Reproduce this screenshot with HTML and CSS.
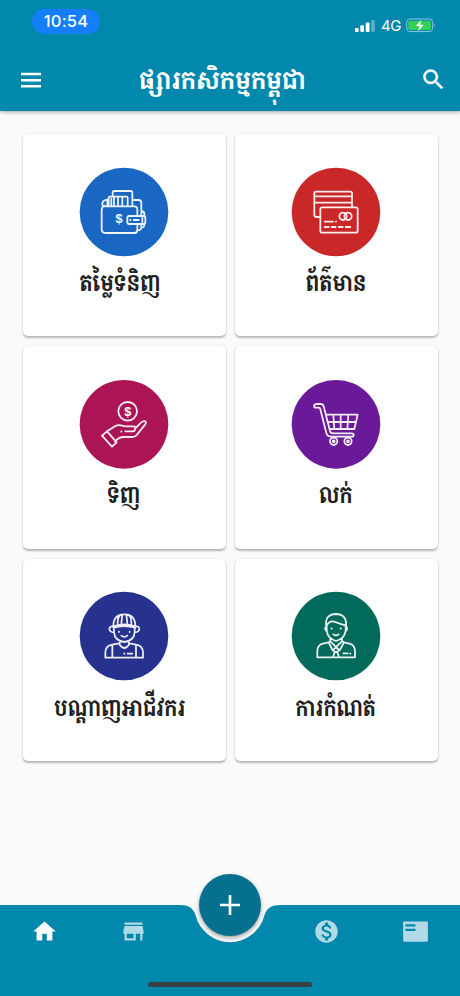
FILE: index.html
```html
<!DOCTYPE html>
<html lang="km">
<head>
<meta charset="utf-8">
<meta name="viewport" content="width=device-width">
<title>ផ្សារកសិកម្មកម្ពុជា</title>
<link rel="stylesheet" href="styles.css">
</head>
<body>
<div class="screen">
  <header class="header">
    <div class="status">
      <span class="time">10:54</span>
      <div class="indicators">
        <svg class="signal" width="22" height="14" viewBox="0 0 22 14" fill="#fff"><rect x="1" y="9" width="3.7" height="4" rx="1"/><rect x="6.3" y="6.3" width="3.7" height="6.7" rx="1"/><rect x="11.7" y="3.6" width="3.8" height="9.4" rx="1"/><rect x="17.2" y="1" width="3.6" height="12" rx="1" opacity=".35"/></svg>
        <span class="network">4G</span>
        <svg class="battery" width="30" height="15" viewBox="0 0 30 15"><rect x=".7" y="1" width="26" height="12.6" rx="3.6" fill="none" stroke="#8dc9dc"/><rect x="2.3" y="2.7" width="22.7" height="9.3" rx="2" fill="#34d058"/><path d="M28 5.5q1.6 1.8 0 3.6z" fill="#8dc9dc"/><path d="M15.4 1.8 9.8 8h3.7l-1.4 5.2L17.8 6.800h-3.700z" fill="#fff"/></svg>
      </div>
    </div>
    <div class="toolbar">
      <svg class="menu" width="22" height="16" viewBox="0 0 22 16"><path d="M1 2h20M1 8.200h20M1 14.200h20" stroke="#fff" stroke-width="2.500"/></svg>
      <h1 class="title">ផ្សារកសិកម្មកម្ពុជា</h1>
      <svg class="search" width="27" height="27" viewBox="0 0 24 24"><path fill="#fff" stroke="#fff" stroke-width=".3" d="M15.500 14h-.790l-.280-.270C15.410 12.590 16 11.110 16 9.500 16 5.910 13.090 3 9.500 3S3 5.910 3 9.500 5.910 16 9.500 16c1.610 0 3.090-.590 4.230-1.570l.270.280v.790l5 4.990L20.490 19l-4.990-5zm-6 0C7.010 14 5 11.990 5 9.500S7.010 5 9.500 5 14 7.010 14 9.500 11.990 14 9.500 14z"/></svg>
    </div>
  </header>

  <main class="grid">
    <section class="card">
      <svg class="icon" viewBox="27 20 270 270"><circle cx="162" cy="155" r="133" fill="#1966c3"/>
        <g class="line"><path d="M106 138h87q9 0 9 9v20M202 191v18q0 9-9 9h-86q-12 0-12-12v-56q0-11 9-14M104 138q-9-2-7-10 3-9 15-10v20M116 138v-26q0-3 4-3h50q3 0 3 3v26M132 110v28M144 109v29M157 109v29M124 115v19M128 108V97q0-5 5-5h49q5 0 5 5v40M188 119h17q9 0 9 9v38M215 152q8 1 8 9v5M202 209q12 2 12-8v-9M214 202q10 0 9-11"/><rect x="172" y="167" width="54" height="24" rx="5"/><path d="M181 178v2M191 179h15M217 173v12"/></g><text class="dollar" x="147" y="189">$</text></svg>
      <h2 class="label left-a">តម្លៃទំនិញ</h2>
    </section>
    <section class="card">
      <svg class="icon" viewBox="33 20 270 270"><circle cx="168" cy="155" r="133" fill="#c92728"/>
        <g class="line"><path d="M118 170h-8q-7 0-7-7V99q0-5 5-5h103q5 0 5 5v40M103 108h113M103 127h113"/><rect x="121" y="141" width="112" height="76" rx="6"/><circle cx="189" cy="168" r="11"/><circle cx="204" cy="168" r="11"/><path d="M134 184h25M168 183v1M134 200h12M155 200h12M176 200h12M197 200h14"/></g></svg>
      <h2 class="label">ព័ត៌មាន</h2>
    </section>
    <section class="card">
      <svg class="icon" viewBox="27 20 270 270"><circle cx="162" cy="156" r="133" fill="#ab1556"/>
        <g class="line"><circle cx="173" cy="117" r="28"/><path d="m96 190 15-13 29 33-14 13zM111 177l24-15q8-5 17-3l15 3h22q8 0 7 7-1 8-8 8h-22M195 169l18-18q9-7 14-3 2 3-2 9l-24 30q-5 7-14 7h-27q-10 0-17 6l-8 7M154 177v1"/></g><text class="dollar" x="173" y="130">$</text></svg>
      <h2 class="label">ទិញ</h2>
    </section>
    <section class="card">
      <svg class="icon" viewBox="33 20 270 270"><circle cx="168" cy="156" r="133" fill="#6a1a99"/>
        <g class="line"><path d="M109 95h13q7 0 9 7l19 74q2 7 9 7h57q5 0 5 5t-5 5h-62q-12 0-15-11l-18-71q-1-5-5-5h-8q-6 0-6-5t7-6zM138 127h95l-10 43h-74M142 149h86M160 128l3 42M182 128v42M205 128l-3 42"/><circle cx="161" cy="207" r="11"/><circle cx="204" cy="207" r="11"/><circle cx="161" cy="207" r="3"/><circle cx="204" cy="207" r="3"/></g></svg>
      <h2 class="label">លក់</h2>
    </section>
    <section class="card">
      <svg class="icon" viewBox="102 19 270 270"><circle cx="237" cy="154" r="133" fill="#27328f"/>
        <g class="line"><path d="M205 125q0-36 33-36t33 36q-34-12-66 0zM205 124v5q33-10 66 0v-5M218 117q-1-20 9-27M229 116l3-26M247 116l-3-26M259 117q1-20-9-27M207 129v14q2 25 31 29 29-4 31-29v-14M206 126q-12-3-13 7 1 10 14 10M270 126q12-3 13 7-1 10-14 10M222 141v1M254 141v1M229 153q9 7 18 0M224 168v12q14 20 28 0v-12M222 176l-20 4q-21 3-21 24v15h113v-15q0-21-21-24l-20-4M202 180v39M273 180v39M238 206v1M248 207h14"/></g></svg>
      <h2 class="label left-b">បណ្ដាញអាជីវករ</h2>
    </section>
    <section class="card">
      <svg class="icon" viewBox="33 19 270 270"><circle cx="168" cy="154" r="133" fill="#026a5b"/>
        <g class="line"><path d="M139 126q-6-37 29-38 34 1 30 38M139 124q10-17 23-13 25 9 35 11M140 119v19q3 24 28 31 26-7 29-31v-19M139 125q-8 6 2 16M198 125q8 6-2 16M155 131v1M182 131v1M160 149q8 6 16 0M151 162v8l17 17 18-17v-8M151 169l-5 4 12 24 10-10 11 10 13-24-6-4M146 173l-17 4q-17 4-17 23v18h113v-18q0-19-17-23l-17-4M168 187l-8 9 4 6-5 16M168 187l8 9-4 6 5 16M164 202h8M190 206h13M211 206v1"/></g></svg>
      <h2 class="label">ការកំណត់</h2>
    </section>
  </main>

  <footer class="footer">
    <svg class="footer-shape" width="460" height="91" viewBox="0 0 460 91"><path fill="#0287ad" d="M0 0H179C189 0 193 3 195.500 10A35.500 35.500 0 0 0 264.500 10C267 3 271 0 281 0H460V91H0z"/></svg>
    <nav class="nav">
      <svg class="item" viewBox="0 0 24 24" fill="#fff"><path d="M10 20v-6h4v6h5v-8h3L12 3 2 12h3v8z"/></svg>
      <svg class="item dim" viewBox="0 0 24 24"><path d="M4 4h16v2H4zM21 14v-2l-1-5H4l-1 5v2h1v6h10v-6h4v6h2v-6h1zm-9 4H6v-4h6v4z"/></svg>
      <span class="notch"></span>
      <svg class="item dim" viewBox="0 0 24 24"><path d="M12 2C6.480 2 2 6.480 2 12s4.480 10 10 10 10-4.480 10-10S17.520 2 12 2zm1.410 16.090V20h-2.670v-1.930c-1.710-.360-3.160-1.460-3.270-3.400h1.960c.1 1.050.820 1.870 2.650 1.870 1.960 0 2.400-.980 2.400-1.590 0-.830-.440-1.610-2.670-2.140-2.480-.6-4.180-1.620-4.180-3.670 0-1.720 1.390-2.840 3.110-3.210V4h2.670v1.950c1.860.450 2.790 1.860 2.850 3.390H14.300c-.050-1.110-.640-1.870-2.220-1.870-1.500 0-2.400.680-2.400 1.640 0 .840.650 1.390 2.670 1.910s4.180 1.390 4.180 3.910c-.010 1.830-1.380 2.830-3.120 3.160z"/></svg>
      <svg class="item dim" viewBox="0 0 24 24"><path d="M22 3H2c-.6 0-1 .5-1 1v16c0 .6.4 1 1 1h20c.6 0 1-.4 1-1V4c0-.5-.4-1-1-1zM12 11.500H3V9.500h9zM12 7.500H3V5.500h9z"/></svg>
    </nav>
    <button class="fab" aria-label="+"><svg width="22" height="22" viewBox="0 0 22 22"><path d="M11 1v20M1 11h20" stroke="#fff" stroke-width="2.600"/></svg></button>
    <div class="home-bar"></div>
  </footer>
</div>
</body>
</html>
```
FILE: styles.css
```css
* { box-sizing: border-box; }
body { margin: 0; background: #fafafa; font-family: Inter, "Khmer OS Battambang", "Noto Serif Khmer", "Noto Sans Khmer", "Khmer OS", sans-serif; }
.screen { width: 460px; height: 996px; display: flex; flex-direction: column; overflow: hidden; background: #fafafa; }
.header { height: 111px; flex: none; background: #0287ad; box-shadow: 0 1px 4px rgba(0,0,0,.35); color: #fff; }
.status { display: flex; justify-content: space-between; height: 48px; padding: 9px 24px 0 32px; }
.time { width: 68px; height: 25px; border-radius: 13px; background: #147efb; font-size: 16.500px; font-weight: 500; line-height: 25px; text-align: center; letter-spacing: .2px; }
.indicators { display: flex; align-items: center; height: 15px; margin-top: 9px; }
.network { margin: 0 5px 0 5px; font-size: 15px; font-weight: 400; line-height: 15px; letter-spacing: -.4px; }
.toolbar { display: flex; align-items: center; gap: 12px; height: 63px; padding: 0 13px 0 20px; }
.title { flex: 1; margin: 0; padding-right: 19px; text-align: center; font-size: 25px; line-height: 50px; font-weight: 700; white-space: nowrap; transform: scaleX(.908); }
.grid { display: grid; grid-template-columns: 203px 203px; grid-auto-rows: 202.300px; column-gap: 9px; row-gap: 10.200px; padding: 23px 0 0 22.500px; flex: 1; align-content: start; }
.card { display: flex; flex-direction: column; align-items: center; padding-top: 32.500px; border-radius: 5px; background: #fff; box-shadow: 0 1.500px 2px rgba(0,0,0,.26), 0 0 2px rgba(0,0,0,.08); }
.icon { width: 90px; height: 90px; flex: none; }
.line { fill: none; stroke: #fff; stroke-width: 5.300; stroke-linecap: round; stroke-linejoin: round; opacity: .92; }
.dollar { fill: #fff; font: 700 38px "Liberation Sans", sans-serif; text-anchor: middle; }
.label { margin: 4.500px 0 0; font-size: 23px; line-height: 44px; font-weight: 700; color: #212121; white-space: nowrap; transform: scaleX(.845); }
.left-a { margin-right: 7px; }
.left-b { margin-right: 9px; }
.footer { position: relative; flex: none; height: 91px; }
.footer-shape { position: absolute; inset: 0; }
.nav { position: relative; display: flex; justify-content: space-between; padding: 13px 31px 0; }
.item { width: 27px; height: 27px; }
.notch { width: 42px; }
.dim { fill: #b0dbe6; }
.fab { position: absolute; left: 199px; top: -31.500px; width: 62px; height: 62px; padding: 0; border: 0; border-radius: 50%; background: #05718f; display: grid; place-items: center; box-shadow: 0 2px 4px rgba(0,0,0,.35); }
.home-bar { position: absolute; left: 148px; top: 77px; width: 164px; height: 5px; border-radius: 3px; background: #3a4045; }
```
